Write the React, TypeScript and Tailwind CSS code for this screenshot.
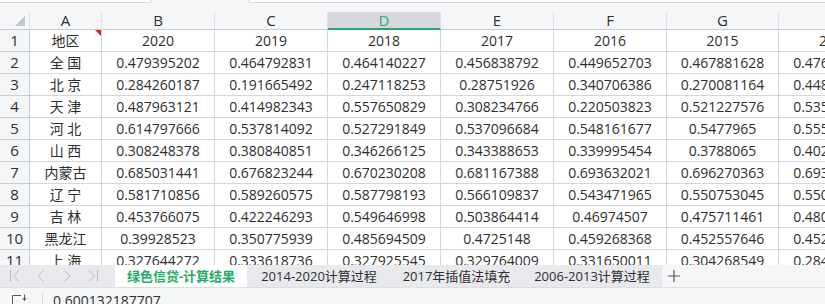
import React from "react";

const FONT = { fontFamily: '"Open Sans", "Noto Sans CJK SC", sans-serif' };

const letters = ["A", "B", "C", "D", "E", "F", "G", "H"];
const widths = ["w-[72px]", "w-[113px]", "w-[113px]", "w-[113px]", "w-[113px]", "w-[113px]", "w-[112px]", "w-[113px]"];

const rows: string[][] = [
  ["地区", "2020", "2019", "2018", "2017", "2016", "2015", "2014"],
  ["全 国", "0.479395202", "0.464792831", "0.464140227", "0.456838792", "0.449652703", "0.467881628", "0.476127093"],
  ["北 京", "0.284260187", "0.191665492", "0.247118253", "0.28751926", "0.340706386", "0.270081164", "0.448236515"],
  ["天 津", "0.487963121", "0.414982343", "0.557650829", "0.308234766", "0.220503823", "0.521227576", "0.535201847"],
  ["河 北", "0.614797666", "0.537814092", "0.527291849", "0.537096684", "0.548161677", "0.5477965", "0.555073218"],
  ["山 西", "0.308248378", "0.380840851", "0.346266125", "0.343388653", "0.339995454", "0.3788065", "0.402518834"],
  ["内蒙古", "0.685031441", "0.676823244", "0.670230208", "0.681167388", "0.693632021", "0.696270363", "0.693340127"],
  ["辽 宁", "0.581710856", "0.589260575", "0.587798193", "0.566109837", "0.543471965", "0.550753045", "0.550842719"],
  ["吉 林", "0.453766075", "0.422246293", "0.549646998", "0.503864414", "0.46974507", "0.475711461", "0.480265512"],
  ["黑龙江", "0.39928523", "0.350775939", "0.485694509", "0.4725148", "0.459268368", "0.452557646", "0.452983106"],
  ["上 海", "0.327644272", "0.333618736", "0.327925545", "0.329764009", "0.331650011", "0.304268549", "0.284317620"],
];

function NavIcon({ kind }: { kind: "first" | "prev" | "next" | "last" }) {
  return (
    <svg width="12" height="14" viewBox="0 0 12 14" fill="none" stroke="#b9bcc3" strokeWidth="1">
      {kind === "first" && (
        <>
          <path d="M1.5 1v12" />
          <path d="M10 1.5L4.5 7l5.5 5.5" />
        </>
      )}
      {kind === "prev" && <path d="M8.5 1.5L3 7l5.5 5.5" />}
      {kind === "next" && <path d="M3.5 1.5L9 7l-5.5 5.5" />}
      {kind === "last" && (
        <>
          <path d="M2 1.5L7.5 7 2 12.5" />
          <path d="M10.5 1v12" />
        </>
      )}
    </svg>
  );
}

export default function App() {
  return (
    <div className="w-[825px] h-[304px] overflow-hidden bg-[#f5f6f8] text-[#2e2e2e] flex flex-col" style={FONT}>
      {/* formula bar edges */}
      <div className="h-[12px] flex shrink-0">
        <div className="w-[152px] h-[3px] bg-white border-b border-r border-[#d6d8dd] rounded-br-[3px]" />
        <div className="w-[96px]" />
        <div className="flex-1 h-[3px] bg-white border-b border-l border-[#d6d8dd] rounded-bl-[3px]" />
      </div>

      {/* sheet grid */}
      <div className="h-[253px] overflow-hidden shrink-0">
        <div className="flex h-[18px] border-b border-[#c9cdd5]">
          <div className="w-[30px] shrink-0 border-r border-[#dfe1e6] relative">
            <svg className="absolute left-[15px] top-[4px]" width="10" height="10" viewBox="0 0 10 10">
              <path d="M10 0V10H0Z" fill="#c3c6cc" />
            </svg>
          </div>
          {letters.map((l, i) => (
            <div
              key={l}
              className={`${widths[i]} shrink-0 flex items-center justify-center text-[15px] leading-none border-r ${
                l === "D"
                  ? "bg-[#d6d8dd] text-[#22b07a] border-b-2 border-b-[#21a86a] border-r-[#dfe1e6] -mb-px pt-[1px]"
                  : "border-[#dfe1e6]"
              }`}
            >
              {l}
            </div>
          ))}
        </div>
        {rows.map((r, ri) => (
          <div key={ri} className="flex h-[22px]">
            <div className="w-[30px] shrink-0 border-r border-b border-[#c9cdd5] flex items-center justify-center text-[15px] leading-none">
              {ri + 1}
            </div>
            {r.map((v, ci) => (
              <div
                key={ci}
                className={`${widths[ci]} shrink-0 bg-white border-r border-b border-[#d3d6dd] flex items-center justify-center text-[14px] leading-none whitespace-nowrap overflow-hidden relative`}
              >
                {v}
                {ri === 0 && ci === 0 && (
                  <svg className="absolute right-0 top-0" width="6" height="6" viewBox="0 0 6 6">
                    <path d="M0 0H6V6Z" fill="#e02020" />
                  </svg>
                )}
              </div>
            ))}
          </div>
        ))}
      </div>

      {/* sheet tabs */}
      <div className="h-[22px] flex shrink-0 text-[13px] leading-none">
        <div className="w-[115px] bg-[#e8e9ec] flex items-center pl-[9px] gap-[14px]">
          <NavIcon kind="first" />
          <NavIcon kind="prev" />
          <NavIcon kind="next" />
          <NavIcon kind="last" />
        </div>
        <div className="w-[132px] bg-white flex items-center justify-center text-[#1fae62] font-bold">
          绿色信贷-计算结果
        </div>
        <div className="w-[144px] bg-[#e8e9ec] flex items-center justify-center">2014-2020计算过程</div>
        <div className="w-[131px] bg-[#e8e9ec] flex items-center justify-center">2017年插值法填充</div>
        <div className="w-[140px] bg-[#e8e9ec] flex items-center justify-center">2006-2013计算过程</div>
        <div className="flex-1 flex items-center pl-[6px]">
          <svg width="12" height="12" viewBox="0 0 12 12" stroke="#555" strokeWidth="1.2">
            <path d="M6 0v12M0 6h12" />
          </svg>
        </div>
      </div>

      {/* status bar */}
      <div className="flex-1 border-t border-[#dcdee2] flex items-start">
        <div className="w-[42px] pl-[12px] pt-[6px]">
          <svg width="16" height="14" viewBox="0 0 16 14" fill="none" stroke="#555" strokeWidth="1">
            <path d="M0.5 1.5H9M0.5 1.5V14M12.5 0.5v6" />
            <path d="M11 4l1.5 2.5L14 4" />
          </svg>
        </div>
        <div className="w-px h-[12px] bg-[#d6d8dc] mt-[5px]" />
        <div className="pl-[10px] pt-[6px] text-[14px] leading-none">0.600132187707</div>
      </div>
    </div>
  );
}
